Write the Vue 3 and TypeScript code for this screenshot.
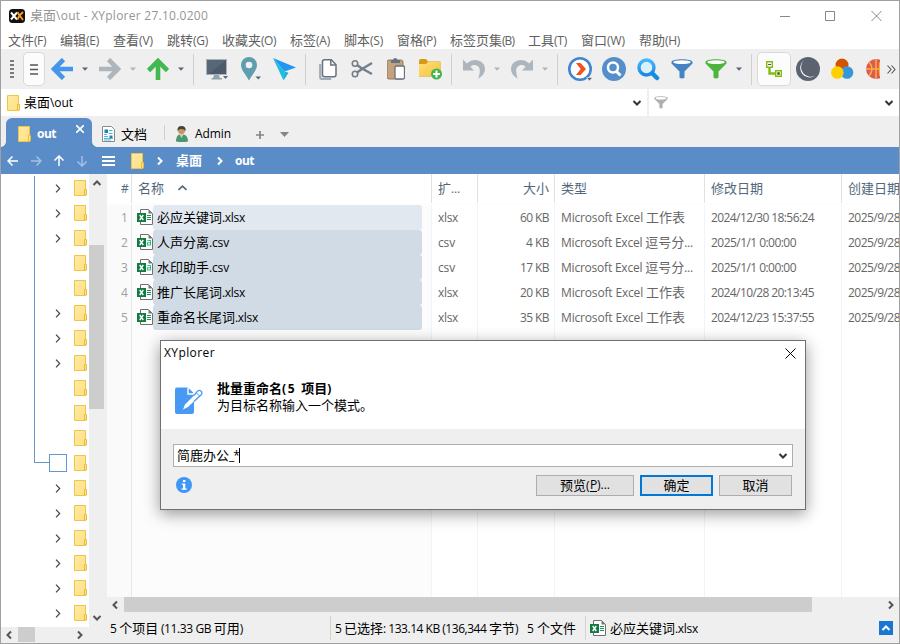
<script setup lang="ts">
import { defineComponent, h, onMounted, ref } from 'vue'

// Text line whose Latin runs are tracked so that the line fills the given width.
const Txt = defineComponent({
  props: { t: { type: String, required: true }, w: { type: Number, default: 0 } },
  setup(props) {
    const root = ref<HTMLElement | null>(null)
    const tracking = ref(0)
    const runs = props.t.match(/[\u3000-\u9fff]+|[^\u3000-\u9fff]+/g) ?? []
    const isCjk = (s: string) => /^[\u3000-\u9fff]/.test(s)
    onMounted(() => {
      if (!props.w || !root.value) return
      const count = runs.filter((r) => !isCjk(r)).join('').length
      if (count) tracking.value = (props.w - root.value.getBoundingClientRect().width) / count
    })
    return () =>
      h('span', { ref: root, class: 'txt', style: { '--track': tracking.value + 'px' } },
        runs.map((r) => h('span', { class: isCjk(r) ? 'cjk' : 'lat' }, r)))
  },
})

interface FileRow { name: string; nw: number; ext: string; ew: number; size: string; sw: number; type: string; tw: number; date: string; dw: number }

const menus: [string, number][] = [
  ['文件(F)', 38], ['编辑(E)', 39], ['查看(V)', 40], ['跳转(G)', 41], ['收藏夹(O)', 54], ['标签(A)', 40],
  ['脚本(S)', 39], ['窗格(P)', 39], ['标签页集(B)', 64], ['工具(T)', 39], ['窗口(W)', 44], ['帮助(H)', 41],
]

const files: FileRow[] = [
  { name: '必应关键词.xlsx', nw: 88, ext: 'xlsx', ew: 20, size: '60 KB', sw: 29, type: 'Microsoft Excel 工作表', tw: 124, date: '2024/12/30 18:56:24', dw: 103 },
  { name: '人声分离.csv', nw: 72, ext: 'csv', ew: 17, size: '4 KB', sw: 23, type: 'Microsoft Excel 逗号分...', tw: 132, date: '2025/1/1 0:00:00', dw: 85 },
  { name: '水印助手.csv', nw: 72, ext: 'csv', ew: 17, size: '17 KB', sw: 29, type: 'Microsoft Excel 逗号分...', tw: 132, date: '2025/1/1 0:00:00', dw: 85 },
  { name: '推广长尾词.xlsx', nw: 88, ext: 'xlsx', ew: 20, size: '20 KB', sw: 29, type: 'Microsoft Excel 工作表', tw: 124, date: '2024/10/28 20:13:45', dw: 103 },
  { name: '重命名长尾词.xlsx', nw: 101, ext: 'xlsx', ew: 20, size: '35 KB', sw: 29, type: 'Microsoft Excel 工作表', tw: 124, date: '2024/12/23 15:37:55', dw: 103 },
]

// c = collapsed branch, n = leaf, s = current node
const tree = 'cccnncccnnnscccccc'.split('')
</script>

<template>
  <svg class="defs" width="0" height="0">
    <defs>
      <linearGradient id="gFolder" x1="0" y1="0" x2="1" y2="1"><stop offset="0" stop-color="#ffeaa6" /><stop offset="1" stop-color="#ffdf80" /></linearGradient>
      <linearGradient id="gFolderBig" x1="0" y1="0" x2="1" y2="1"><stop offset="0" stop-color="#ffe07a" /><stop offset="1" stop-color="#f6c13a" /></linearGradient>
      <linearGradient id="gLens" x1="0" y1="0" x2="0" y2="1"><stop offset="0" stop-color="#45b8fa" /><stop offset="1" stop-color="#1e88e5" /></linearGradient>
      <symbol id="folder" viewBox="0 0 14 16">
        <path d="M.5.5h11v15H.5z" fill="url(#gFolder)" stroke="#ecc54a" />
        <path d="M10.5 9.5h2v5.5h-2z" fill="#ffe38f" stroke="#e8bc3c" />
      </symbol>
      <symbol id="xlsx" viewBox="0 0 16 16">
        <path d="M3.5 4V.5h8l4 4v11h-12V12" fill="#fff" stroke="#707070" />
        <path d="M11.500.5v4h4z" fill="#777" />
        <path d="M0 4h9v9H0z" fill="#107c41" />
        <path d="M2.700 6l3.600 5M6.300 6l-3.600 5" stroke="#fff" stroke-width="1.400" />
        <path d="M10 6.500h4M10 8.500h4M10 10.500h4" stroke="#1e8f55" />
      </symbol>
      <symbol id="csv" viewBox="0 0 16 16">
        <path d="M3.5 4V.5h8l4 4v11h-12V12" fill="#fff" stroke="#707070" />
        <path d="M11.500.5v4h4z" fill="#777" />
        <path d="M0 4h9v9H0z" fill="#107c41" />
        <path d="M2.700 6l3.600 5M6.300 6l-3.600 5" stroke="#fff" stroke-width="1.400" />
        <path d="M10.300 6.500h3.200v5M13.500 8.700h-3v2.300h3" fill="none" stroke="#33c481" stroke-width="1.100" />
      </symbol>
      <symbol id="caret" viewBox="0 0 6 4"><path d="M0 .5h6L3 3.700z" fill="currentColor" /></symbol>
      <symbol id="down" viewBox="0 0 10 8"><path d="M1.500 2L5 5.500 8.500 2" fill="none" stroke="currentColor" stroke-width="2" /></symbol>
      <symbol id="up" viewBox="0 0 10 8"><path d="M1.500 6L5 2.500 8.500 6" fill="none" stroke="currentColor" stroke-width="2" /></symbol>
      <symbol id="left" viewBox="0 0 8 10"><path d="M6 1.500L2.500 5 6 8.500" fill="none" stroke="currentColor" stroke-width="2" /></symbol>
      <symbol id="right" viewBox="0 0 8 10"><path d="M2 1.500L5.500 5 2 8.500" fill="none" stroke="currentColor" stroke-width="2" /></symbol>
      <symbol id="arrow" viewBox="0 0 12 12"><path d="M11 6H1.500M5.500 1.500L1 6l4.500 4.500" fill="none" stroke="currentColor" stroke-width="1.500" /></symbol>
      <symbol id="bigarrow" viewBox="0 0 22 22"><path d="M22 11H4M12.500 1.500L3 11l9.500 9.500" fill="none" stroke="currentColor" stroke-width="4.600" /></symbol>
      <symbol id="funnel" viewBox="0 0 22 20">
        <path d="M.5 3C.5 1.400 5 .3 11 .3S21.500 1.400 21.500 3v1.500L13.500 12.500v6.200q-2.500 1.400-5 0v-6.200L.5 4.500z" fill="currentColor" />
        <ellipse cx="11" cy="3.200" rx="8.700" ry="1.900" fill="#fff" />
      </symbol>
      <symbol id="undo" viewBox="0 0 22 20">
        <path d="M0 .5v11h11l-3.700-3.700c4-3.700 9.500-.8 9.500 3.700 0 3-.8 5.500-1.500 8.200 4.500-2.700 6.700-6 6.700-9.700C22 1.500 11-2.500 3.900 4.400z" fill="currentColor" />
      </symbol>
    </defs>
  </svg>

  <div class="window">
    <header class="title">
      <svg class="logo" width="16" height="16" viewBox="0 0 16 16">
        <rect y="1" width="16" height="14" rx="3.500" fill="#111" />
        <path d="M2 4.500l6 7M8 4.500l-6 7" stroke="#fff" stroke-width="2" />
        <path d="M8.500 4l2 3.500-2 4M14 4l-4 4M11 8l3 4" fill="none" stroke="#ff9d1c" stroke-width="1.800" />
      </svg>
      <Txt t="桌面\out - XYplorer 27.10.0200" :w="178" />
      <svg class="winctl" width="102" height="12" viewBox="0 0 102 12" fill="none" stroke="#888">
        <path d="M0 6.500h10M45.500 1.500h9v9h-9zM91.500 1l10 10M101.500 1l-10 10" />
      </svg>
    </header>
    <nav class="menu"><Txt v-for="m in menus" :key="m[0]" :t="m[0]" :w="m[1]" /></nav>

    <div class="toolbar">
      <div class="edge"><svg width="4" height="18"><path d="M0 1h4M0 5h4M0 9h4M0 13h4M0 17h4" stroke="#555" stroke-width="1.600" /></svg></div>
      <div class="edge raised"><svg width="8" height="11"><path d="M0 1h8M0 5.500h8M0 10h8" stroke="#555" stroke-width="1.700" /></svg></div>
      <div class="split blue"><svg width="22" height="22"><use href="#bigarrow" /></svg><svg class="ct" width="6" height="4"><use href="#caret" /></svg></div>
      <div class="split dim"><svg class="flip" width="22" height="22"><use href="#bigarrow" /></svg><svg class="ct" width="6" height="4"><use href="#caret" /></svg></div>
      <div class="split green"><svg class="turn" width="22" height="22"><use href="#bigarrow" /></svg><svg class="ct" width="6" height="4"><use href="#caret" /></svg></div>
      <i class="sep wide"></i>
      <div class="tool">
        <svg width="24" height="22" viewBox="0 0 24 22"><path d="M1 1h21v16H1z" fill="#a9b2b9" /><path d="M2 2h19v14H2z" fill="#4c5a69" /><path d="M2 2h19L4 16H2z" fill="#586777" /><path d="M9 17h5l1 3h2v1.500H6.500V20H8z" fill="#92a3ad" /><path d="M18 18h5l-2.500 3z" fill="#53677c" /></svg>
      </div>
      <div class="tool">
        <svg width="22" height="24" viewBox="0 0 22 24"><path d="M9 0a8 8 0 0 1 8 8c0 5-4.500 9-8 15.500C5.500 17 1 13 1 8a8 8 0 0 1 8-8z" fill="#5f9eae" /><circle cx="9" cy="8" r="3.300" fill="#f1f1f1" /><path d="M15.500 19.500h5.500l-2.700 3z" fill="#53677c" /></svg>
      </div>
      <div class="tool">
        <svg width="24" height="24" viewBox="0 0 24 24"><path d="M0 1l23 9.500-11.500 4z" fill="#2196f3" /><path d="M0 1l11.500 13.500L10.500 23.500z" fill="#1fbcdc" /><path d="M11.500 14.500l4 1.200-5 7.800z" fill="#14b0d6" /></svg>
      </div>
      <i class="sep slim"></i>
      <div class="tool">
        <svg width="18" height="21" viewBox="0 0 18 21" fill="none" stroke="#8793a0" stroke-width="1.500"><path d="M1.200 5v13.200q0 1.800 2 1.800h9" stroke-width="2.200" stroke="#a1acb6" /><path d="M5.500.8h6.800l4.700 5v10q0 2-2 2H5.500q-2 0-2-2v-13q0-2 2-2z" fill="#fff" stroke="#66727f" /><path d="M11.800 1v5h5" stroke="#66727f" /></svg>
      </div>
      <div class="tool">
        <svg width="22" height="20" viewBox="0 0 22 20" fill="none" stroke="#737f8b"><circle cx="4" cy="4.500" r="2.700" stroke-width="1.600" /><circle cx="4" cy="15" r="2.700" stroke-width="1.600" /><path d="M6 6l5 3.500L21 15M6 13.500l5-3.500L21 4" stroke-width="2.400" /></svg>
      </div>
      <div class="tool">
        <svg width="18" height="22" viewBox="0 0 18 22"><rect y="2" width="16" height="19" rx="2" fill="#c5a27b" stroke="#8e7a65" /><path d="M4 2h2q.5-2 2.200-2t2.300 2h2.500v3H4z" fill="#66727f" /><rect x="8" y="8" width="9.500" height="13" rx="1.500" fill="#fff" stroke="#66727f" stroke-width="1.300" /></svg>
      </div>
      <div class="tool">
        <svg width="24" height="22" viewBox="0 0 24 22"><path d="M1 3q0-2 2-2h5l2 2.500h12.500V17q0 1.500-1.500 1.500H1z" fill="#d69b15" /><path d="M1 6h7l2-2h12.500v14H1z" fill="url(#gFolderBig)" /><circle cx="18.500" cy="16" r="5.500" fill="#43b649" /><path d="M18.500 12.500v7M15 16h7" stroke="#fff" stroke-width="2" /></svg>
      </div>
      <i class="sep"></i>
      <div class="split dim"><svg width="22" height="20"><use href="#undo" /></svg><svg class="ct" width="6" height="4"><use href="#caret" /></svg></div>
      <div class="split dim"><svg class="flip" width="22" height="20"><use href="#undo" /></svg><svg class="ct" width="6" height="4"><use href="#caret" /></svg></div>
      <i class="sep"></i>
      <div class="tool">
        <svg width="24" height="24" viewBox="0 0 24 24"><circle cx="12" cy="12" r="10.700" fill="#fff" stroke="#4384ce" stroke-width="2.600" /><path d="M8 6h4.500l5.500 6-5.500 6H8l4.700-6z" fill="#f4511e" /><path d="M18.500 20.500h6l-3 3.500z" fill="#53677c" stroke="#efefef" stroke-width=".6" /></svg>
      </div>
      <div class="tool">
        <svg width="24" height="24" viewBox="0 0 24 24" fill="none" stroke="#fff"><circle cx="12" cy="12" r="12" fill="#568ecb" stroke="none" /><circle cx="11" cy="10.500" r="5" stroke-width="2.500" /><path d="M14.500 14.500l4 4" stroke-width="3" /></svg>
      </div>
      <div class="tool">
        <svg width="23" height="23" viewBox="0 0 23 23" fill="none"><circle cx="9.500" cy="9.500" r="7.500" fill="#d8f0ff" stroke="url(#gLens)" stroke-width="3.400" /><path d="M15.500 15.500l4.500 4.500" stroke="#168be2" stroke-width="4.500" stroke-linecap="round" /></svg>
      </div>
      <div class="tool steel"><svg width="22" height="20"><use href="#funnel" /></svg></div>
      <div class="split leaf"><svg width="22" height="20"><use href="#funnel" /></svg><svg class="ct dark" width="6" height="4"><use href="#caret" /></svg></div>
      <i class="sep"></i>
      <div class="tool raised">
        <svg width="16" height="16" viewBox="0 0 16 16" fill="none" stroke="#80bd17"><path d="M.7.700h5.600v5.600H.7zM9.700 9.700h5.600v5.600H9.700z" fill="#fff" stroke-width="1.400" /><path d="M3.500 7v5.500H9" stroke-width="2.400" /><path d="M2 3.500h3" stroke="#555" /><path d="M11.500 11.500h2v2h-2z" fill="#555" stroke="#679711" /></svg>
      </div>
      <div class="tool">
        <svg width="24" height="24" viewBox="0 0 24 24"><circle cx="12" cy="12" r="12" fill="#5b6370" /><path d="M8 3.300A9.500 9.500 0 1 0 19.500 18.500 9.600 9.600 0 0 1 8 3.300z" fill="#fff" /></svg>
      </div>
      <div class="tool">
        <svg width="24" height="22" viewBox="0 0 24 22"><circle cx="12" cy="7" r="6.500" fill="#d35400" /><circle cx="17" cy="14.500" r="6.300" fill="#3498db" /><circle cx="7.300" cy="14.500" r="6.300" fill="#ffd000" /></svg>
      </div>
      <div class="ball">
        <svg width="14" height="20" viewBox="0 0 14 20"><circle cx="10" cy="10" r="10" fill="#dc5a58" /><path d="M0 10h14M10 0v20M3 3q6 7 0 14M14 3q-1 7 0 14" fill="none" stroke="#fbb03b" stroke-width="1.500" /></svg>
      </div>
      <svg class="more" width="9" height="9" viewBox="0 0 9 9" fill="none" stroke="#555"><path d="M.5.500l3.500 4-3.500 4M4.500.500l3.500 4-3.500 4" stroke-width="1.100" /></svg>
    </div>

    <div class="address">
      <div class="path">
        <svg width="14" height="16"><use href="#folder" /></svg>
        <Txt t="桌面\out" :w="49" />
        <svg class="end" width="10" height="8"><use href="#down" /></svg>
      </div>
      <div class="filter">
        <svg width="14" height="13"><use href="#funnel" /></svg>
        <svg class="end" width="10" height="8"><use href="#down" /></svg>
      </div>
    </div>

    <div class="tabs">
      <div class="tab active">
        <svg width="14" height="16"><use href="#folder" /></svg><b><Txt t="out" :w="19" /></b>
        <svg class="close" width="8" height="8"><path d="M0 0l8 8M8 0L0 8" stroke="#fff" stroke-width="1.700" /></svg>
      </div>
      <div class="tab doc">
        <svg width="13" height="16" viewBox="0 0 13 16"><path d="M.5.500h9l3 3v12H.5z" fill="#fff" stroke="#8a8a8a" /><path d="M7 4.500h3.500M2 8.500h3M6.500 7.500h4M2 10.500h4M2 12.500h9M2 14h7" stroke="#55b4d8" /><path d="M2.500 3.500h3.500v3.500H2.500zM7.500 9.500h3v2.500h-3z" fill="#1685b5" /></svg>
        <Txt t="文档" />
      </div>
      <i class="tabsep"></i>
      <div class="tab user">
        <svg width="14" height="16" viewBox="0 0 14 16"><path d="M1 15.500q0-6 3.500-7h4q4.500 1 4.500 7-6 1-12 0z" fill="#4a9776" /><path d="M4.500 8.500l2 3.500 2-3.500V7h-4z" fill="#e6c8a0" /><circle cx="6.500" cy="4.500" r="3.500" fill="#c89468" /><path d="M2.500 5Q2 0 6.500 0t4.200 5Q9 2.700 6 3q-2 0-3.500 2z" fill="#4b4038" /></svg>
        <Txt t="Admin" :w="36" />
      </div>
      <svg class="plus" width="8" height="8"><path d="M4 0v8M0 4h8" stroke="#858585" stroke-width="1.700" /></svg>
      <svg class="tri" width="9" height="5"><path d="M0 0h9L4.500 5z" fill="#858585" /></svg>
    </div>

    <div class="crumbs">
      <svg width="12" height="12"><use href="#arrow" /></svg>
      <svg class="flip faded" width="12" height="12"><use href="#arrow" /></svg>
      <svg class="turn" width="12" height="12"><use href="#arrow" /></svg>
      <svg class="turnd faded" width="12" height="12"><use href="#arrow" /></svg>
      <svg class="burger" width="13" height="10"><path d="M0 1h13M0 5h13M0 9h13" stroke="#fff" stroke-width="2" /></svg>
      <svg class="cf" width="14" height="16"><use href="#folder" /></svg>
      <svg class="cc" width="8" height="10"><use href="#right" /></svg>
      <b class="desk"><Txt t="桌面" /></b>
      <svg class="cc2" width="8" height="10"><use href="#right" /></svg>
      <b><Txt t="out" :w="19" /></b>
    </div>

    <main class="panes">
      <aside class="side">
        <div class="treebox">
          <div class="tree">
            <div class="branch"></div>
            <div v-for="(k, i) in tree" :key="i" class="node">
              <span class="mark">
                <svg v-if="k === 'c'" width="6" height="9"><path d="M1 .7l3.700 3.800L1 8.300" fill="none" stroke="#444" stroke-width="1.200" /></svg>
                <i v-else-if="k === 's'" class="box"></i>
              </span>
              <svg width="14" height="16"><use href="#folder" /></svg>
            </div>
          </div>
          <div class="vbar">
            <svg width="10" height="8"><use href="#up" /></svg>
            <i></i>
            <svg width="10" height="8"><use href="#down" /></svg>
          </div>
        </div>
        <div class="hbar small">
          <svg width="8" height="10"><use href="#left" /></svg><i></i><svg class="r" width="8" height="10"><use href="#right" /></svg>
        </div>
      </aside>

      <section class="right">
        <div class="list">
          <div class="row head">
            <span class="num"><Txt t="#" :w="6" /></span>
            <span class="name"><Txt t="名称" /><svg width="9" height="6"><path d="M.5 5l4-3.800 4 3.800" fill="none" stroke="#52677c" stroke-width="1.600" /></svg></span>
            <span class="ext"><Txt t="扩..." :w="22" /></span>
            <span class="size"><Txt t="大小" /></span>
            <span class="type"><Txt t="类型" /></span>
            <span class="date"><Txt t="修改日期" /></span>
            <span class="made"><Txt t="创建日期" /></span>
          </div>
          <div v-for="(f, i) in files" :key="i" class="row">
            <span class="num"><Txt :t="String(i + 1)" :w="6" /></span>
            <span class="name"><svg width="16" height="16"><use :href="'#' + f.ext" /></svg><span class="sel" :class="{ focus: i === 0 }"><Txt :t="f.name" :w="f.nw" /></span></span>
            <span class="ext"><Txt :t="f.ext" :w="f.ew" /></span>
            <span class="size"><Txt :t="f.size" :w="f.sw" /></span>
            <span class="type"><Txt :t="f.type" :w="f.tw" /></span>
            <span class="date"><Txt :t="f.date" :w="f.dw" /></span>
            <span class="made"><Txt t="2025/9/28" :w="52" /></span>
          </div>
          <div class="row rest">
            <span class="num"></span><span class="name"></span><span class="ext"></span><span class="size"></span><span class="type"></span><span class="date"></span><span class="made"></span>
          </div>
        </div>
        <div class="hbar">
          <svg width="8" height="10"><use href="#left" /></svg><i></i><svg class="r" width="8" height="10"><use href="#right" /></svg>
        </div>
        <footer class="status">
          <div class="s1"><Txt t="5 个项目 (11.33 GB 可用)" :w="133" /></div>
          <div class="s2"><Txt t="5 已选择: 133.14 KB (136,344 字节)" :w="183" /><Txt t="5 个文件" :w="49" /></div>
          <div class="s3"><svg width="16" height="16"><use href="#xlsx" /></svg><Txt t="必应关键词.xlsx" :w="88" /></div>
          <svg class="toggle" width="14" height="14"><path d="M0 0h14v14H0z" fill="#1976d2" /><path d="M3.500 9L7 5.500 10.500 9" fill="none" stroke="#fff" stroke-width="2" /></svg>
        </footer>
      </section>
    </main>
  </div>

  <div class="dialog">
    <div class="dtop">
      <div class="dtitle"><Txt t="XYplorer" :w="51" /><svg width="11" height="11"><path d="M.5.500l10 10M10.500.500l-10 10" stroke="#000" /></svg></div>
      <div class="dmsg">
        <svg width="28" height="28" viewBox="0 0 28 28">
          <path d="M2 .5h11l6 6V25q0 2-2 2H2q-2 0-2-2V2.500Q0 .5 2 .5z" fill="#4799f3" />
          <path d="M13 .5v6.500h6" fill="none" stroke="#fff" stroke-width="1.400" />
          <path d="M8 22.500l2-5L23 4.500l3 3L13 20z" fill="#fff" />
          <path d="M19 8.500l3.500-4.300q2-1.500 3.700 0 1.300 1.700 0 3.500L19 14.500" fill="none" stroke="#4799f3" stroke-width="1.300" /><path d="M21.500 6l3 3" stroke="#4799f3" />
        </svg>
        <div><b><Txt t="批量重命名(5 项目)" :w="116" /></b><Txt t="为目标名称输入一个模式。" /></div>
      </div>
    </div>
    <div class="dbody">
      <div class="combo"><Txt t="简鹿办公_*" :w="62" /><i></i><svg class="end" width="10" height="8"><use href="#down" /></svg></div>
      <div class="actions">
        <svg width="16" height="16" viewBox="0 0 16 16"><circle cx="8" cy="8" r="8" fill="#4096f5" /><path d="M7 3h2.400v2H7zM5.800 6.500h3.500v5h1.500v1.300H5.500v-1.300H7V7.800H5.800z" fill="#fff" /></svg>
        <button class="pv"><span class="label"><Txt t="预览(" :w="30" /><u><Txt t="P" :w="7" /></u><Txt t=")..." :w="13" /></span></button>
        <button class="ok"><Txt t="确定" /></button>
        <button><Txt t="取消" /></button>
      </div>
    </div>
  </div>
</template>

<style>
body { overflow: hidden; background: #fff; }
.txt { display: inline-block; white-space: pre; line-height: 16px; }
.txt .cjk { font-family: "Noto Sans CJK SC", sans-serif; font-size: 13px; }
.txt .lat { font-family: "Open Sans", "Noto Sans CJK SC", sans-serif; font-size: 12px; letter-spacing: var(--track); }
</style>

<style scoped>
svg { display: block; flex: none; }
.defs { position: absolute; }
i { display: block; flex: none; }
b { font-weight: 700; }
.window { box-sizing: border-box; width: 900px; height: 644px; border: 1px solid #a0a0a0; background: #fff; display: flex; flex-direction: column; font: 12px "Open Sans", "Noto Sans CJK SC", sans-serif; color: #000; overflow: hidden; }
.title { height: 29px; display: flex; align-items: center; color: #959595; padding: 0 17px 0 8px; flex: none; }
.logo { margin-right: 5px; }
.winctl { margin-left: auto; }
.menu { box-sizing: border-box; height: 19px; padding: 2px 7px 0; display: flex; gap: 14px; align-items: center; color: #606060; flex: none; }
.toolbar { height: 40px; background: #efefef; display: flex; align-items: center; flex: none; }
.edge { width: 22px; display: flex; justify-content: center; flex: none; }
.tool { width: 34px; display: flex; justify-content: center; flex: none; }
.raised { box-sizing: border-box; height: 34px; align-items: center; background: #fcfcfc; border: 1px solid #d9d9d9; border-radius: 5px; }
.split { box-sizing: border-box; width: 48px; padding-left: 6px; display: flex; align-items: center; gap: 9px; flex: none; }
.ct { color: #53677c; }
.dim, .dim .ct { color: #adb5bd; }
.blue { color: #4396e9; }
.green { color: #42b950; }
.leaf { color: #4db53c; }
.steel { color: #4583c1; }
.flip { transform: scaleX(-1); }
.turn { transform: rotate(90deg); }
.turnd { transform: rotate(-90deg); }
.sep { box-sizing: border-box; width: 10px; height: 31px; padding-left: 4px; }
.sep::before { content: ""; display: block; width: 1px; height: 31px; background: #cfcfcf; }
.sep.wide { width: 11px; }
.sep.slim { width: 9px; padding-left: 3px; }
.ball { width: 21px; padding-left: 7px; box-sizing: content-box; }
.address { height: 28px; box-sizing: border-box; border-top: 1px solid #efefef; display: flex; gap: 2px; background: #efefef; flex: none; margin-top: -1px; }
.path, .filter { background: #fff; display: flex; align-items: center; }
.path { width: 646px; box-sizing: border-box; padding: 0 5px 0 6px; gap: 3px; }
.filter { flex: 1; padding: 0 5px; color: #b0b0b0; }
.end { margin-left: auto; color: #333; }
.tabs { height: 31px; background: #efefef; display: flex; align-items: center; flex: none; padding-left: 5px; }
.tab { display: flex; align-items: center; }
.active { position: relative; box-sizing: border-box; width: 86px; height: 29px; align-self: flex-end; background: #5a8dc8; border-radius: 6px 6px 0 0; color: #fff; padding: 2px 8px 0 12px; gap: 5px; }
.active::before, .active::after { content: ""; position: absolute; bottom: 0; width: 5px; height: 5px; }
.active::before { left: -5px; background: radial-gradient(circle at 0 0, transparent 4.500px, #5a8dc8 5px); }
.active::after { right: -5px; background: radial-gradient(circle at 100% 0, transparent 4.500px, #5a8dc8 5px); }
.close { margin: -9px 0 0 auto; }
.doc, .user { padding-top: 5px; }
.doc { margin-left: 10px; gap: 6px; }
.tabsep { width: 1px; height: 15px; background: #cfcfcf; margin: 2px 10px 0 17px; }
.user { gap: 6px; }
.plus { margin: 6px 0 0 25px; }
.tri { margin: 6px 0 0 16px; }
.crumbs { height: 27px; background: #5a8dc8; color: #fff; display: flex; align-items: center; padding-left: 6px; gap: 11px; flex: none; }
.faded { opacity: .45; }
.burger { margin-left: 3px; }
.cf { margin-left: 5px; }
.cc2 { margin-left: 3px; }
.desk { margin-left: 1px; }
.panes { flex: 1; min-height: 0; display: flex; background: #efefef; }
.side { width: 103px; margin-right: 3px; display: flex; flex-direction: column; flex: none; }
.treebox { height: 453px; display: flex; flex: none; }
.tree { position: relative; box-sizing: border-box; width: 88px; background: #fff; padding-top: 1px; overflow: hidden; }
.branch { position: absolute; left: 33px; top: 2px; width: 14px; height: 286px; border: solid #6398cc; border-width: 0 0 1px 1px; }
.node { height: 25px; display: flex; align-items: center; }
.mark { width: 18px; margin: 0 7px 0 48px; display: flex; justify-content: center; }
.mark svg { margin-top: 1px; }
.box { box-sizing: border-box; width: 18px; height: 18px; border: 1px solid #6398cc; background: #fff; }
.vbar { box-sizing: border-box; width: 15px; padding: 5px 0 5px; display: flex; flex-direction: column; align-items: center; color: #555; }
.vbar i { width: 15px; height: 164px; background: #cdcdcd; margin-top: 58px; }
.vbar svg:last-child { margin-top: auto; }
.hbar { height: 15px; box-sizing: border-box; display: flex; align-items: center; background: #efefef; padding: 0 4px; color: #555; flex: none; }
.hbar i { height: 15px; width: 688px; background: #cdcdcd; margin-left: 5px; }
.hbar .r { margin-left: auto; }
.small { width: 88px; padding: 0 5px 0 4px; }
.small i { width: 17px; }
.right { flex: 1; min-width: 0; display: flex; flex-direction: column; }
.list { height: 423px; background: #fff; display: flex; flex-direction: column; overflow: hidden; color: #666; flex: none; }
.row { display: flex; height: 25px; flex: none; }
.row > span { box-sizing: border-box; display: flex; align-items: center; border-right: 1px solid #f0f3f8; flex: none; }
.row .num { width: 25px; background: #fafafa; border-color: #e8e8e8; color: #a0a0a0; justify-content: flex-end; padding-right: 4px; }
.row .name { width: 300px; background: #fcfcfc; color: #000; padding-left: 5px; }
.row .ext { width: 46px; padding-left: 6px; }
.row .size { width: 77px; justify-content: flex-end; padding-right: 5px; }
.row .type { width: 150px; padding-left: 6px; }
.row .date { width: 137px; padding-left: 6px; }
.row .made { width: 64px; padding-left: 6px; border: 0; }
.head { height: 29px; border-bottom: 2px solid #fdfdfd; }
.head > span, .head .num, .head .name { background: #fff; border-color: #e1e1e1; color: #52677c; }
.head .name { gap: 14px; padding-left: 6px; }
.sel { display: flex; align-items: center; width: 269px; height: 25px; border-radius: 3px; background: #d1dbe5; padding-left: 4px; box-sizing: border-box; }
.sel.focus { background: #e1e8f0; }
.row .name > svg { margin-top: -1px; }
.head .name > svg { margin-top: -2px; }
.row.rest { flex: 1; }
.status { flex: 1; display: flex; align-items: center; }
.status > div { box-sizing: border-box; display: flex; align-items: center; height: 24px; border-right: 1px solid #d2d2d2; }
.status .s1 { width: 224px; padding: 1px 0 0 3px; }
.status .s2 { width: 255px; padding: 1px 0 0 4px; gap: 9px; }
.status .s3 { border: 0; padding: 1px 0 0 4px; gap: 4px; }
.toggle { margin: 0 6px 0 auto; }
.dialog { position: absolute; left: 160px; top: 340px; box-sizing: border-box; width: 646px; height: 170px; border: 1px solid #707070; background: #efefef; box-shadow: 0 4px 15px rgba(0, 0, 0, .4); font: 12px "Open Sans", "Noto Sans CJK SC", sans-serif; }
.dtop { height: 88px; background: #fff; }
.dtitle { height: 24px; display: flex; align-items: center; justify-content: space-between; padding: 0 9px 0 3px; }
.dmsg { display: flex; align-items: flex-start; padding: 15px 0 0 14px; }
.dmsg > svg { margin-top: 7px; }
.dmsg > div { display: flex; flex-direction: column; margin-left: 14px; align-items: flex-start; }
.dmsg b, .desk { display: flex; }
.dbody { padding: 15px 12px; }
.combo { box-sizing: border-box; height: 23px; border: 1px solid #adadad; background: #fff; display: flex; align-items: center; padding: 0 4px 0 3px; }
.combo i { width: 1px; height: 15px; background: #000; }
.actions { display: flex; gap: 6px; padding: 8px 1px 0 3px; align-items: center; }
.actions > svg { margin: -1px auto 0 0; }
button { box-sizing: border-box; width: 73px; height: 21px; padding: 0; border: 1px solid #adadad; background: #e1e1e1; color: #000; display: flex; align-items: center; justify-content: center; }
.pv { width: 98px; }
.ok { border: 2px solid #0078d7; }
.label { display: flex; }
u { display: block; text-decoration: none; height: 15px; border-bottom: 1px solid #000; box-sizing: border-box; }
</style>
